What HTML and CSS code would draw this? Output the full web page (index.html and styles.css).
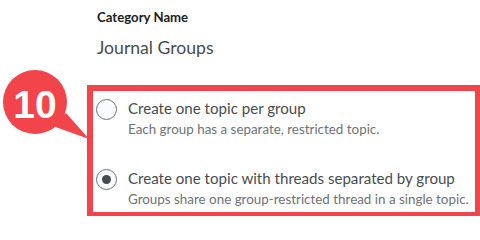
FILE: index.html
```html
<!DOCTYPE html>
<html lang="en">
<head>
<meta charset="utf-8">
<title>Category Name</title>
<link rel="stylesheet" href="styles.css">
</head>
<body>
<div class="page">
  <div class="field">
    <div class="label">Category Name</div>
    <div class="value">Journal Groups</div>
  </div>
  <div class="options">
    <div class="option">
      <span class="radio"></span>
      <div class="text">
        <div class="title">Create one topic per group</div>
        <div class="desc">Each group has a separate, restricted topic.</div>
      </div>
    </div>
    <div class="option second">
      <span class="radio checked"></span>
      <div class="text">
        <div class="title">Create one topic with threads separated by group</div>
        <div class="desc">Groups share one group-restricted thread in a single topic.</div>
      </div>
    </div>
  </div>
  <div class="badge">
    <svg class="badge-shape" width="92" height="80" viewBox="0 0 92 80">
      <polygon points="50,56 66,44 89,70" fill="#f2444b"/>
      <circle cx="35" cy="33" r="32" fill="#f2444b"/>
    </svg>
    <span class="badge-num">10</span>
  </div>
</div>
</body>
</html>
```
FILE: styles.css
```css
html, body {
  margin: 0;
  padding: 0;
  background: #ffffff;
}
.page {
  position: relative;
  width: 480px;
  height: 216px;
  overflow: hidden;
  font-family: Lato, "Noto Sans", sans-serif;
}
.field {
  padding: 9px 0 0 97px;
}
.label {
  font-size: 13.2px;
  font-weight: 700;
  line-height: 16px;
  color: #202122;
}
.value {
  margin-top: 11px;
  font-size: 17.6px;
  line-height: 24px;
  color: #494c4e;
}
.options {
  margin: 25px 0 0 87px;
  width: 376px;
  border: 6px solid #f2444b;
  padding: 7px 3px 4px 3px;
  box-shadow: 1px 1px 2px rgba(0, 0, 0, 0.25);
}
.option {
  display: flex;
  align-items: flex-start;
  gap: 11px;
}
.option.second {
  margin-top: 30px;
}
.radio {
  flex: none;
  box-sizing: border-box;
  width: 21px;
  height: 21px;
  margin-top: 1px;
  border-radius: 50%;
  border: 1px solid #6e7376;
  background: #f9fbff;
  display: flex;
  align-items: center;
  justify-content: center;
}
.radio.checked::after {
  content: "";
  width: 9px;
  height: 9px;
  border-radius: 50%;
  background: #494c4e;
}
.title {
  font-size: 15.1px;
  line-height: 20px;
  color: #494c4e;
}
.desc {
  margin-top: 2px;
  font-size: 13.4px;
  line-height: 18px;
  color: #6e7376;
}
.badge {
  position: absolute;
  left: 0;
  top: 69px;
  width: 92px;
  height: 80px;
}
.badge-shape {
  display: block;
}
.badge-num {
  position: absolute;
  left: 0;
  top: 14px;
  width: 70px;
  text-align: center;
  font-family: "Liberation Sans", Arial, sans-serif;
  font-weight: 700;
  font-size: 39px;
  line-height: 44px;
  color: #ffffff;
}
```
